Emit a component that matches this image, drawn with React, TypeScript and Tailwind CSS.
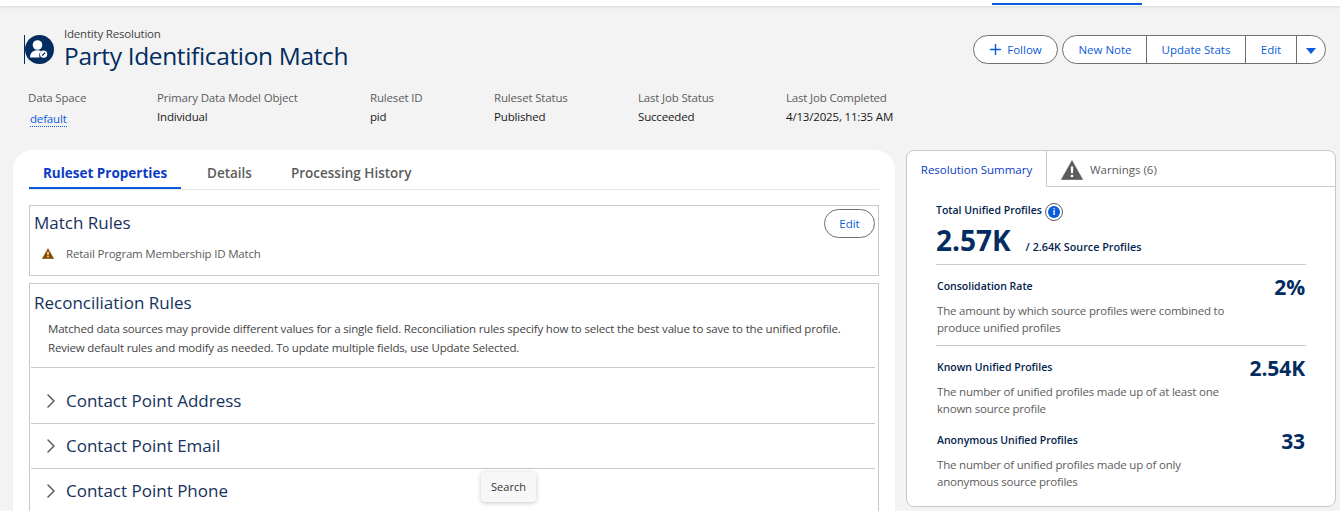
import React from "react";
import { ChevronRight, Plus } from "lucide-react";

const FONT = { fontFamily: '"Open Sans", "Noto Sans", sans-serif' };

const metaItems = [
  { label: "Primary Data Model Object", value: "Individual", width: "w-[213px]" },
  { label: "Ruleset ID", value: "pid", width: "w-[124px]" },
  { label: "Ruleset Status", value: "Published", width: "w-[144px]" },
  { label: "Last Job Status", value: "Succeeded", width: "w-[148px]" },
  { label: "Last Job Completed", value: "4/13/2025, 11:35 AM", width: "w-[180px]" },
];

const Warning: React.FC<{ className: string; color: string }> = ({ className, color }) => (
  <svg viewBox="0 0 24 22" className={className}>
    <path d="M12 0.8 L23.6 21.4 H0.4 Z" fill={color} stroke={color} strokeLinejoin="round" strokeWidth="0.8" />
    <rect x="10.8" y="7" width="2.4" height="7.6" rx="1" fill="#fff" />
    <circle cx="12" cy="17.6" r="1.5" fill="#fff" />
  </svg>
);

const PartyIcon = () => (
  <svg viewBox="0 0 29 29" className="block h-[29px] w-[29px]">
    <circle cx="14.5" cy="14.5" r="14.5" fill="#032d60" />
    <circle cx="12.5" cy="10" r="4.8" fill="#fff" />
    <path d="M5 22.5 c0-5 3.4-7.2 7.5-7.2 c1.6 0 2.8 .3 3.8 .8 c-1.8 1.4-2.6 3.6-1.8 6.4 Z" fill="#fff" />
    <circle cx="18.6" cy="19.2" r="3.6" fill="#fff" />
    <path d="M17.2 20.6 L20 17.8" stroke="#032d60" strokeWidth="1.3" />
  </svg>
);

const Stat: React.FC<{ title: string; value: string; text: string[]; border?: boolean; pb: string }> = ({ title, value, text, border, pb }) => (
  <div className={border ? "border-b border-[#c9c9c9]" : ""}>
    <div className="flex justify-between">
      <div className={`pt-[13px] ${pb}`}>
        <div className="pl-px text-[10.5px] leading-[16px] font-semibold text-[#03234d]">{title}</div>
        <div className="mt-[8px] pl-px text-[11.5px] leading-[17px] tracking-[-0.2px] text-[#5c5c5c]">
          {text.map((t) => (
            <div key={t}>{t}</div>
          ))}
        </div>
      </div>
      <div className="pr-px pt-[8px] text-[21px] leading-[28px] font-bold tracking-[-0.1px] text-[#032d60]">{value}</div>
    </div>
  </div>
);

const Accordion: React.FC<{ label: string; last?: boolean }> = ({ label, last }) => (
  <div className={`flex h-[45px] items-center pl-[8px] ${last ? "pb-[2px]" : "border-b border-[#c9c9c9]"}`}>
    <ChevronRight className="h-[24px] w-[24px] text-[#5c5c5c]" strokeWidth={1.5} />
    <span className="ml-[3px] text-[17px] text-[#16325c]">{label}</span>
  </div>
);

const App: React.FC = () => {
  return (
    <div className="relative h-[511px] w-[1340px] overflow-hidden bg-[#f3f3f3]" style={FONT}>
      {/* top strip */}
      <div className="flex h-[6px] justify-end bg-white pr-[198px] shadow-[0_1px_3px_rgba(0,0,0,0.12)]">
        <div className="mt-[3px] h-[2px] w-[150px] bg-[#0b5cdb]" />
      </div>

      {/* header */}
      <div className="flex justify-between pt-[21px] pl-[24px] pr-[14px]">
        <div className="flex">
          <div className="mt-[8px] self-start border-l border-[#032d60]">
            <PartyIcon />
          </div>
          <div className="ml-[10px]">
            <div className="text-[11.5px] leading-[14px] tracking-[-0.2px] text-[#444]">Identity Resolution</div>
            <div className="text-[24.5px] leading-[30px] tracking-[-0.35px] text-[#032d60]">Party Identification Match</div>
          </div>
        </div>
        <div className="flex items-start gap-[4px] pt-[8px] text-[11.5px] text-[#0b5cdb]">
          <button className="flex h-[29px] w-[85px] items-center justify-center gap-[3px] rounded-full border border-[#706e6b] bg-white pr-[2px]">
            <Plus className="h-[17px] w-[17px]" strokeWidth={2} />
            Follow
          </button>
          <div className="flex h-[29px] items-stretch divide-x divide-[#706e6b] rounded-full border border-[#706e6b] bg-white">
            <button className="w-[84px] pl-[1px]">New Note</button>
            <button className="w-[99px]">Update Stats</button>
            <button className="w-[51px]">Edit</button>
            <button className="flex w-[28px] items-center justify-center pt-[3px] pr-[1px]">
              <span className="h-0 w-0 border-x-[5px] border-t-[6px] border-x-transparent border-t-[#0b5cdb]" />
            </button>
          </div>
        </div>
      </div>

      {/* record fields */}
      <div className="mt-[19px] flex pl-[28px] text-[11.5px] leading-[16px] tracking-[-0.17px]">
        <div className="w-[129px]">
          <div className="text-[#5c5c5c]">Data Space</div>
          <a className="ml-[2px] mt-[5px] inline-block border-b border-dotted border-[#0b5cdb] leading-[15px] text-[#0b5cdb]">default</a>
        </div>
        {metaItems.map((m) => (
          <div key={m.label} className={m.width}>
            <div className="text-[#5c5c5c]">{m.label}</div>
            <div className="mt-[3px] text-[#181818]">{m.value}</div>
          </div>
        ))}
      </div>

      {/* panels */}
      <div className="mt-[23px] flex items-start pl-[13px]">
        <div className="h-[400px] w-[882px] rounded-t-[20px] bg-white px-[16px]">
          <div className="flex h-[40px] items-end border-b border-[#e5e5e5] text-[13.5px] font-semibold">
            <div className="flex h-[38px] w-[152px] items-center justify-center border-b-[2px] border-[#0b5cdb] pt-[8px] font-bold text-[#0b3bc4]">Ruleset Properties</div>
            <div className="flex h-[38px] items-center pl-[26px] pt-[6px] text-[#5c5c5c]">Details</div>
            <div className="flex h-[38px] items-center pl-[39px] pt-[6px] text-[#5c5c5c]">Processing History</div>
          </div>

          <div className="mt-[15px] h-[71px] w-[850px] border border-[#c9c9c9] pl-[1px] pr-[3px]">
            <div className="flex justify-between">
              <div className="pl-[3px] pt-[4px] text-[17px] leading-[26px] text-[#16325c]">Match Rules</div>
              <button className="mt-[3px] h-[29px] w-[51px] rounded-full border border-[#706e6b] text-[11.5px] text-[#0b5cdb]">Edit</button>
            </div>
            <div className="mt-[7px] flex items-center pl-[11px] text-[11.5px] tracking-[-0.2px] text-[#5c5c5c]">
              <Warning className="h-[11px] w-[12px]" color="#8c4b02" />
              <span className="ml-[12px]">Retail Program Membership ID Match</span>
            </div>
          </div>

          <div className="mt-[7px] h-[300px] w-[850px] border border-[#c9c9c9] pl-[1px] pr-[3px]">
            <div className="pl-[3px] pt-[6px] text-[17px] leading-[26px] text-[#16325c]">Reconciliation Rules</div>
            <div className="mt-[3px] border-b border-[#c9c9c9] pl-[17px] pb-[10px] text-[11.5px] leading-[19px] tracking-[-0.18px] text-[#444]">
              <div>Matched data sources may provide different values for a single field. Reconciliation rules specify how to select the best value to save to the unified profile.</div>
              <div>Review default rules and modify as needed. To update multiple fields, use Update Selected.</div>
            </div>
            <div className="pt-[11px]">
              <Accordion label="Contact Point Address" />
              <Accordion label="Contact Point Email" />
              <Accordion label="Contact Point Phone" last />
            </div>
          </div>
        </div>

        <div className="ml-[11px] h-[357px] w-[430px] rounded-[8px] border border-[#c9c9c9] bg-white">
          <div className="flex h-[36px] border-b border-[#c9c9c9]">
            <div className="-mb-px flex w-[140px] items-center justify-center border-r border-b border-r-[#c9c9c9] border-b-white pt-[2px] text-[11.5px] text-[#0b3bc4]">Resolution Summary</div>
            <div className="flex items-center pl-[14px] pt-[2px] text-[11.5px] text-[#5c5c5c]">
              <Warning className="h-[20px] w-[22px]" color="#5c5c5c" />
              <span className="ml-[7px]">Warnings (6)</span>
            </div>
          </div>
          <div className="px-[29px]">
            <div className="border-b border-[#c9c9c9] pb-[6px] pt-[14px]">
              <div className="flex items-start text-[10.5px] font-semibold leading-[17px] text-[#03234d]">
                <span className="mt-px">Total Unified Profiles</span>
                <span className="ml-[3px] mt-[2px] flex h-[18px] w-[18px] items-center justify-center rounded-full border border-[#5c5c5c]">
                  <span className="flex h-[12px] w-[12px] items-center justify-center rounded-full bg-[#0b5cdb] text-[8px] font-bold leading-none text-white">i</span>
                </span>
              </div>
              <div className="mt-px flex items-end">
                <span className="text-[28px] font-bold leading-[36px] text-[#032d60]">2.57K</span>
                <span className="ml-[15px] pb-[3px] text-[10.8px] font-semibold leading-[16px] text-[#03234d]">/ 2.64K Source Profiles</span>
              </div>
            </div>
            <Stat title="Consolidation Rate" value="2%" border pb="pb-[9px]" text={["The amount by which source profiles were combined to", "produce unified profiles"]} />
            <Stat title="Known Unified Profiles" value="2.54K" pb="pb-[2px]" text={["The number of unified profiles made up of at least one", "known source profile"]} />
            <Stat title="Anonymous Unified Profiles" value="33" pb="pb-0" text={["The number of unified profiles made up of only", "anonymous source profiles"]} />
          </div>
        </div>
      </div>

      {/* hover tooltip */}
      <div className="absolute left-[481px] top-[472px] flex h-[30px] w-[55px] items-center justify-center rounded-[4px] bg-[#f7f7f7] text-[11px] text-[#333] shadow-[0_1px_5px_rgba(0,0,0,0.22)]">
        Search
      </div>
    </div>
  );
};

export default App;
